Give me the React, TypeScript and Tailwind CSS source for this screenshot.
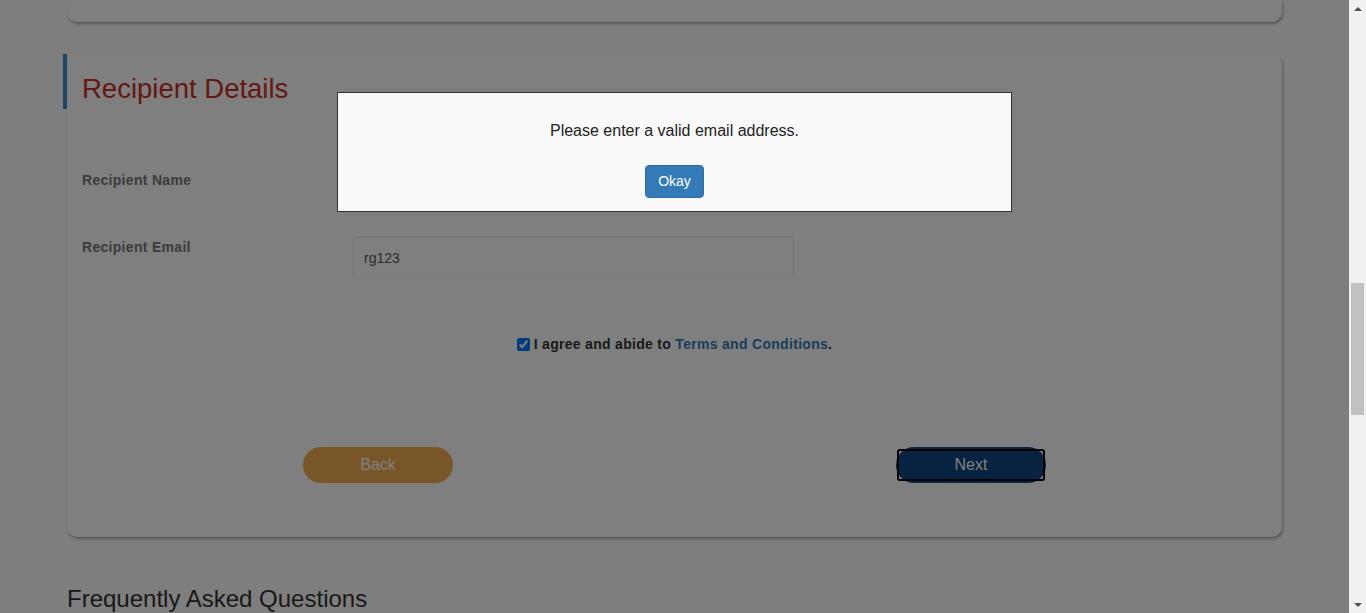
import { useState } from "react";

const sans = "font-['Liberation_Sans',Arial,sans-serif]";

function FakeScrollbar() {
  return (
    <div className="flex w-[17px] shrink-0 flex-col bg-[#f1f1f1]">
      <div className="flex h-[17px] items-center justify-center">
        <span className="h-0 w-0 border-x-[4px] border-b-[4px] border-x-transparent border-b-[#505050]" />
      </div>
      <div className="flex-1 px-[2px]">
        <div className="mt-[266px] h-[132px] w-full bg-[#c1c1c1]" />
      </div>
      <div className="flex h-[17px] items-center justify-center">
        <span className="h-0 w-0 border-x-[4px] border-t-[4px] border-x-transparent border-t-[#505050]" />
      </div>
    </div>
  );
}

function FormRow({ label, value }: { label: string; value: string }) {
  return (
    <div className="flex">
      <label className="mt-px w-[270px] text-[14px] leading-5 font-bold tracking-[0.3px] text-[#777]">
        {label}
      </label>
      <input
        readOnly
        value={value}
        className="h-[42px] w-[442px] rounded-[4px] border border-[#f0f0f0] bg-white px-[11px] pt-[2px] text-[14px] text-[#555] shadow-[inset_0_1px_1px_rgba(0,0,0,0.08)] outline-none"
      />
    </div>
  );
}

export default function App() {
  const [agreed, setAgreed] = useState(true);

  return (
    <div className={`${sans} flex h-[613px] w-full overflow-hidden`}>
      <div className="relative flex-1 overflow-hidden bg-[#fcfcfc]">
        <div className="px-[67px]">
          {/* bottom of previous card */}
          <div className="h-[22px] rounded-b-[10px] bg-white shadow-[1px_2px_3px_rgba(0,0,0,0.3)]" />

          {/* recipient card */}
          <div className="mt-[32px] h-[483px] rounded-[10px] bg-white shadow-[1px_2px_3px_rgba(0,0,0,0.3)]">
            <div className="-ml-[4px] mt-px border-l-4 border-[#3d8ccf] pt-[20px] pb-[5px] pl-[15px]">
              <h2 className="text-[27.5px] leading-[1.1] text-[#c8302a]">Recipient Details</h2>
            </div>

            <div className="mt-[60px] flex flex-col gap-[25px] pl-[15px]">
              <FormRow label="Recipient Name" value="" />
              <FormRow label="Recipient Email" value="rg123" />
            </div>

            <div className="mt-[56px] flex items-center justify-center text-[14px] leading-5 font-bold tracking-[0.3px] text-[#333]">
              <input
                type="checkbox"
                checked={agreed}
                onChange={(e) => setAgreed(e.target.checked)}
                className="m-0 mr-[4px] h-[13px] w-[13px]"
              />
              <span>
                I agree and abide to <a className="text-[#337ab7]">Terms and Conditions</a>.
              </span>
            </div>

            <div className="mt-[93px] flex items-center pl-[236px]">
              <button className="h-[36px] w-[150px] rounded-full bg-[#f0ad4e] text-[16px] text-white">
                Back
              </button>
              <button className="relative ml-[443px] h-[36px] w-[150px] rounded-full bg-[#0f4682] text-[16px] text-white">
                <span className="absolute inset-x-px inset-y-[2px] rounded-[3px] border-2 border-black" />
                <span className="relative">Next</span>
              </button>
            </div>
          </div>

          <h3 className="mt-[49px] text-[24px] leading-[1.1] text-[#333]">Frequently Asked Questions</h3>
        </div>

        {/* modal */}
        <div className="absolute inset-0 flex items-start justify-center bg-black/50 pt-[92px]">
          <div className="flex h-[120px] w-[675px] flex-col items-center border border-[#333] bg-[#f9f9f9] pt-[27px]">
            <p className="text-[16px] leading-[22px] text-[#222]">Please enter a valid email address.</p>
            <button className="mt-[23px] h-[33px] w-[59px] rounded-[4px] border border-[#2e6da4] bg-[#337ab7] text-[14px] text-white">
              Okay
            </button>
          </div>
        </div>
      </div>
      <FakeScrollbar />
    </div>
  );
}
